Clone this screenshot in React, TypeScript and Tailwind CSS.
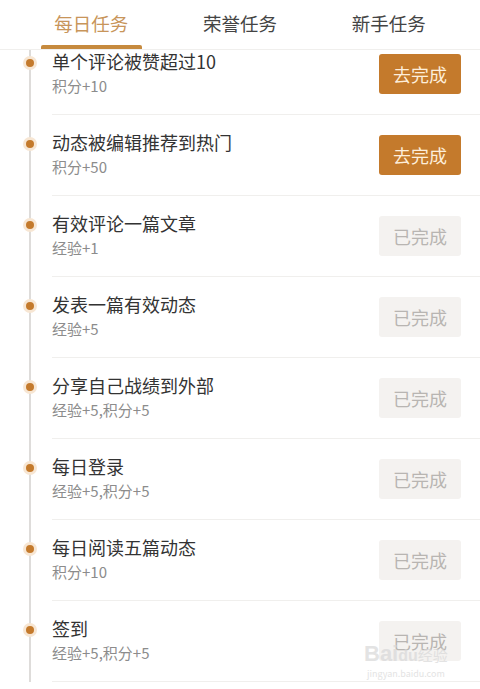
import React from 'react';

type Task = { title: string; reward: string; done: boolean };

const tasks: Task[] = [
  { title: '单个评论被赞超过10', reward: '积分+10', done: false },
  { title: '动态被编辑推荐到热门', reward: '积分+50', done: false },
  { title: '有效评论一篇文章', reward: '经验+1', done: true },
  { title: '发表一篇有效动态', reward: '经验+5', done: true },
  { title: '分享自己战绩到外部', reward: '经验+5,积分+5', done: true },
  { title: '每日登录', reward: '经验+5,积分+5', done: true },
  { title: '每日阅读五篇动态', reward: '积分+10', done: true },
  { title: '签到', reward: '经验+5,积分+5', done: true },
];

const tabs = ['每日任务', '荣誉任务', '新手任务'];

const TaskRow = ({ task }: { task: Task }) => (
  <div className="relative flex h-[81px] items-center">
    <div className="absolute left-[23px] top-[22px] flex h-[14px] w-[14px] items-center justify-center rounded-full bg-[#f7e6d3]">
      <div className="h-[8px] w-[8px] rounded-full bg-[#c47a2c]" />
    </div>
    <div className="ml-[52px] flex h-full flex-1 items-center justify-between border-b border-[#f0efed] pr-[19px]">
      <div className="flex flex-col pb-[2px]">
        <span className="text-[18px] leading-[24px] text-[#333]">{task.title}</span>
        <span className="mt-[2px] text-[15px] leading-[22px] text-[#8c8c8c]">{task.reward}</span>
      </div>
      {task.done ? (
        <div className="flex h-[40px] w-[82px] items-center justify-center rounded-[3px] bg-[#f4f2f0] text-[18px] text-[#b8b5b2]">
          已完成
        </div>
      ) : (
        <div className="flex h-[40px] w-[82px] items-center justify-center rounded-[3px] bg-[#c47a2c] text-[18px] text-[#fdeedb]">
          去完成
        </div>
      )}
    </div>
  </div>
);

export default function App() {
  return (
    <div
      className="relative h-[689px] w-[480px] overflow-hidden bg-white"
      style={{ fontFamily: '"Noto Sans CJK SC", "Noto Sans", sans-serif' }}
    >
      <div className="relative z-10 flex h-[50px] border-b border-[#f0efed] bg-white px-[17px]">
        {tabs.map((t, i) => (
          <div key={t} className="relative flex flex-1 items-center justify-center pb-[2px]">
            <span className={`text-[18.5px] ${i === 0 ? 'text-[#c8955a]' : 'text-[#444]'}`}>{t}</span>
            {i === 0 && (
              <div className="absolute bottom-0 left-[24px] h-[4px] w-[101px] rounded-t-[2px] bg-[#c68a3e]" />
            )}
          </div>
        ))}
      </div>
      <div className="relative -mt-[16px]">
        <div className="absolute bottom-0 left-[29px] top-0 w-[2px] bg-[#dedcda]" />
        {tasks.map((t) => (
          <TaskRow key={t.title} task={t} />
        ))}
      </div>
      <div className="pointer-events-none absolute left-[364px] top-[642px] flex flex-col items-center text-[#d8d8d8] opacity-70">
        <span className="text-[22px] font-bold leading-[24px]" style={{ fontFamily: '"Liberation Sans", sans-serif' }}>
          Bai<span className="text-[16px]">du</span><span className="text-[15px] font-normal" style={{ fontFamily: '"Noto Sans CJK SC", sans-serif' }}>经验</span>
        </span>
        <span className="text-[9px] leading-[12px]">jingyan.baidu.com</span>
      </div>
    </div>
  );
}
